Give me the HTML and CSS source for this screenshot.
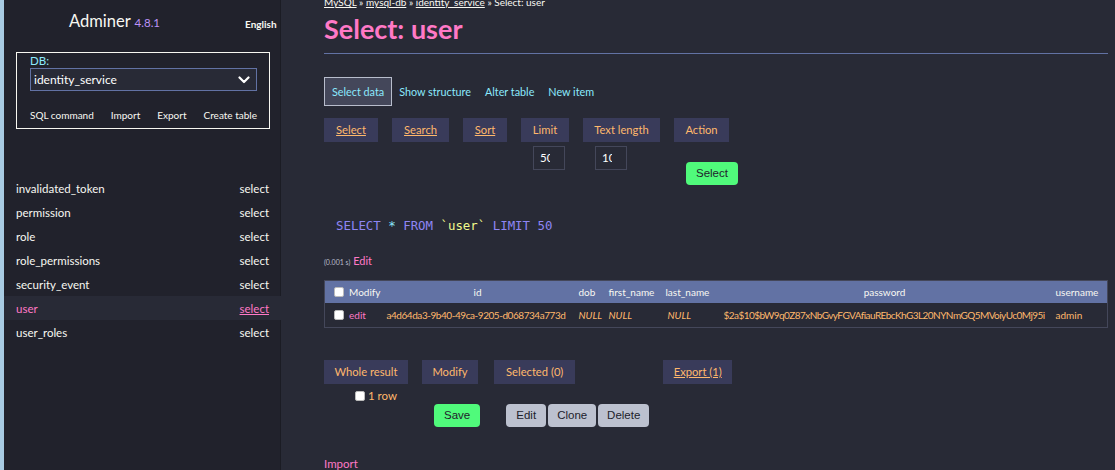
FILE: index.html
```html
<!DOCTYPE html>
<html lang="en">
<head>
<meta charset="utf-8">
<title>Select: user - Adminer</title>
<link rel="stylesheet" href="styles.css">
</head>
<body>
<div class="page">
  <div class="strip"></div>
  <aside class="sidebar">
    <div class="brand">
      <span class="logo">Adminer <span class="version">4.8.1</span></span>
      <span class="lang">English</span>
    </div>
    <div class="dbbox">
      <div class="dblabel">DB:</div>
      <div class="dbselect">
        <span>identity_service</span>
        <svg class="chev" width="12" height="8" viewBox="0 0 12 8"><path d="M1.5 1.5 L6 6 L10.5 1.5" fill="none" stroke="#fff" stroke-width="2.2" stroke-linecap="round" stroke-linejoin="round"/></svg>
      </div>
      <div class="dblinks">
        <a>SQL command</a><a>Import</a><a>Export</a><a>Create table</a>
      </div>
    </div>
    <ul class="tables">
      <li><span>invalidated_token</span><a>select</a></li>
      <li><span>permission</span><a>select</a></li>
      <li><span>role</span><a>select</a></li>
      <li><span>role_permissions</span><a>select</a></li>
      <li><span>security_event</span><a>select</a></li>
      <li class="active"><span>user</span><a>select</a></li>
      <li><span>user_roles</span><a>select</a></li>
    </ul>
  </aside>
  <main class="main">
    <div class="crumbs"><a>MySQL</a> » <a>mysql-db</a> » <a>identity_service</a> » Select: user</div>
    <h1 class="title">Select: user</h1>
    <nav class="tabs">
      <a class="tab current">Select data</a>
      <a class="tab">Show structure</a>
      <a class="tab">Alter table</a>
      <a class="tab">New item</a>
    </nav>
    <div class="form">
      <div class="fs"><span class="legend u w-select">Select</span></div>
      <div class="fs"><span class="legend u w-search">Search</span></div>
      <div class="fs"><span class="legend u w-sort">Sort</span></div>
      <div class="fs"><span class="legend w-limit">Limit</span><span class="inp"><span class="val">50</span></span></div>
      <div class="fs"><span class="legend w-text">Text length</span><span class="inp"><span class="val">10</span></span></div>
      <div class="fs"><span class="legend w-action">Action</span><span class="btn green sel">Select</span></div>
    </div>
    <pre class="sql"><span class="kw">SELECT</span> <span class="star">*</span> <span class="kw">FROM</span> <span class="id">`user`</span> <span class="kw">LIMIT</span> <span class="kw">50</span></pre>
    <p class="time"><span class="small">(0.001 s)</span> <a class="pink">Edit</a></p>
    <table class="data">
      <colgroup>
        <col class="c1"><col class="c2"><col class="c3"><col class="c4"><col class="c5"><col class="c6"><col class="c7">
      </colgroup>
      <thead>
        <tr>
          <th class="left"><span class="cb"></span>Modify</th>
          <th>id</th>
          <th class="left">dob</th>
          <th class="left">first_name</th>
          <th class="left">last_name</th>
          <th>password</th>
          <th class="left">username</th>
        </tr>
      </thead>
      <tbody>
        <tr>
          <td><span class="cb"></span><a class="pink">edit</a></td>
          <td class="idc">a4d64da3-9b40-49ca-9205-d068734a773d</td>
          <td><i>NULL</i></td>
          <td><i>NULL</i></td>
          <td class="right"><i>NULL</i></td>
          <td class="pw">$2a$10$bW9q0Z87xNbGvyFGVAfiauREbcKhG3L20NYNmGQ5MVoiyUc0Mj95i</td>
          <td>admin</td>
        </tr>
      </tbody>
    </table>
    <div class="bottom">
      <div class="bfs"><span class="legend w-whole">Whole result</span><label class="onerow"><span class="cb"></span>1 row</label></div>
      <div class="bfs"><span class="legend w-modify">Modify</span><span class="btn green save">Save</span></div>
      <div class="bfs"><span class="legend w-selected">Selected (0)</span><div class="grays"><span class="btn gray">Edit</span><span class="btn gray">Clone</span><span class="btn gray">Delete</span></div></div>
      <div class="bfs"><span class="legend u w-export">Export (1)</span></div>
    </div>
    <a class="import pink">Import</a>
  </main>
</div>
</body>
</html>
```
FILE: styles.css
```css
* { box-sizing: border-box; }
html, body { margin: 0; padding: 0; }
body {
  background: #282a36;
  color: #f8f8f2;
  font-family: Lato, "Noto Sans", sans-serif;
  font-size: 11px;
  width: 1115px;
  height: 470px;
  overflow: hidden;
}
a { color: inherit; text-decoration: none; }
.page { display: flex; height: 470px; }
.strip { width: 4px; background: #a8cbe2; flex: none; }
.sidebar {
  width: 277px;
  flex: none;
  background: #21222c;
  border-right: 1px solid #1b1c24;
}
.brand {
  position: relative;
  height: 48px;
  padding: 11px 0 0 65px;
}
.logo { font-size: 16.5px; color: #f8f8f2; }
.version { font-size: 11.5px; color: #bd93f9; }
.lang {
  position: absolute;
  left: 241px;
  top: 18px;
  font-size: 10px;
  font-weight: 700;
  color: #f8f8f2;
}
.dbbox {
  margin: 4px 0 0 12px;
  width: 254px;
  height: 77px;
  border: 1px solid #f8f8f2;
  padding: 1px 12px 0 13px;
}
.dblabel { color: #8be9fd; font-size: 11.5px; line-height: 14px; }
.dbselect {
  height: 23px;
  border: 1px solid #6272a4;
  background: #282a36;
  display: flex;
  align-items: center;
  justify-content: space-between;
  padding: 0 6px 0 3px;
  font-size: 12px;
  color: #fff;
}
.dblinks {
  display: flex;
  justify-content: space-between;
  margin-top: 18px;
  font-size: 10px;
  color: #f8f8f2;
}
.tables {
  list-style: none;
  margin: 47px 0 0 0;
  padding: 0;
}
.tables li {
  display: flex;
  justify-content: space-between;
  align-items: center;
  height: 24px;
  padding: 0 11px 0 12px;
  font-size: 11.5px;
  color: #f8f8f2;
}
.tables li.active {
  background: #282a36;
  margin-right: -1px;
  padding-right: 12px;
  color: #ff79c6;
}
.tables li.active a { text-decoration: underline; }

.main {
  flex: 1;
  padding-left: 43px;
  padding-right: 9px;
}
.crumbs {
  margin-top: -5px;
  font-size: 10px;
  line-height: 14px;
  color: #f8f8f2;
}
.crumbs a { text-decoration: underline; }
.title {
  margin: 3px 0 0;
  font-size: 27px;
  font-weight: 700;
  color: #ff79c6;
  line-height: 34px;
  padding-bottom: 7px;
  border-bottom: 1px solid #6272a4;
}
.tabs {
  display: flex;
  align-items: center;
  margin-top: 23px;
  height: 29px;
}
.tab {
  color: #8be9fd;
  font-size: 10.8px;
  padding: 0 7px;
  line-height: 27px;
}
.tab.current {
  border: 1px solid #b8bdcc;
  background: #44475a;
}
.form { display: flex; margin-top: 12px; height: 81px; }
.fs { display: flex; flex-direction: column; align-items: flex-start; margin-right: 14px; }
.legend {
  display: inline-block;
  background: #393b5a;
  color: #ffb86c;
  font-size: 11.2px;
  line-height: 24px;
  height: 24px;
  text-align: center;
  white-space: nowrap;
}
.w-select { width: 54px; } .w-search { width: 57px; } .w-sort { width: 44px; }
.w-limit { width: 48px; } .w-text { width: 77px; } .w-action { width: 55px; }
.w-whole { width: 84px; } .w-modify { width: 56px; } .w-selected { width: 81px; } .w-export { width: 69px; }
.u { text-decoration: underline; }
.inp {
  display: block;
  margin: 4px 0 0 12px;
  width: 32px;
  height: 24px;
  border: 1px solid #44475a;
  color: #fff;
  font-size: 11.5px;
  line-height: 22px;
  padding-left: 6px;
}
.val {
  display: block;
  width: 10px;
  overflow: hidden;
  white-space: nowrap;
}
.btn {
  display: inline-block;
  height: 23px;
  line-height: 23px;
  padding: 0 8px;
  border-radius: 4px;
  font-size: 11.5px;
  color: #21222c;
  font-family: "Liberation Sans", Arial, sans-serif;
}
.sel { margin: 20px 0 0 12px; padding: 0 10px; }
.green { background: #50fa7b; }
.gray { background: #bcc1cf; }
.sql {
  margin: 19px 0 0 12px;
  font-family: "DejaVu Sans Mono", monospace;
  font-size: 12.4px;
  line-height: 16px;
  color: #9d8ff7;
}
.sql .kw { color: #8f86f4; }
.sql .star { color: #8be9fd; }
.sql .id { color: #f1fa8c; }
.time { margin: 20px 0 0; font-size: 11px; line-height: 14px; }
.time .small { font-size: 7px; color: #b8bdcc; }
.pink { color: #ff79c6; }
.data {
  margin-top: 11px;
  border-collapse: collapse;
  table-layout: fixed;
  width: 783px;
  border: 1px solid #44475a;
  font-size: 10px;
}
.c1 { width: 56px; } .c2 { width: 194px; } .c3 { width: 30px; } .c4 { width: 57px; }
.c5 { width: 56px; } .c6 { width: 334px; } .c7 { width: 56px; }
.data th {
  background: #6272a4;
  color: #f8f8f2;
  font-weight: 400;
  height: 22px;
  padding: 0 4px;
  text-align: center;
  white-space: nowrap;
}
.data th.left { text-align: left; }
.data td {
  height: 25px;
  color: #ffb86c;
  padding: 0 4px;
  white-space: nowrap;
  overflow: hidden;
}
.data td.idc { letter-spacing: -0.45px; padding-left: 6px; }
.data td.right { padding-left: 6px; }
.data td i { color: #ffb86c; }
.data td.pw { padding-left: 6px; letter-spacing: -0.55px; }
.cb {
  display: inline-block;
  width: 10px;
  height: 10px;
  background: #fff;
  border: 1px solid #bbb;
  border-radius: 2px;
  vertical-align: -1px;
  margin: 0 5px 0 5px;
}
.bottom { display: flex; margin-top: 32px; }
.bfs { display: flex; flex-direction: column; align-items: flex-start; margin-right: 14px; }
.onerow { color: #ffb86c; font-size: 11.5px; margin: 5px 0 0 31px; }
.onerow .cb { margin: 0 3px 0 0; }
.save { margin: 20px 0 0 12px; padding: 0 10px; }
.grays { display: flex; gap: 2px; margin: 20px 0 0 12px; }
.grays .btn { padding: 0; text-align: center; }
.grays .btn:nth-child(1) { width: 40px; }
.grays .btn:nth-child(2) { width: 48px; }
.grays .btn:nth-child(3) { width: 51px; }
.import {
  display: block;
  margin-top: 30px;
  font-size: 11.5px;
}
```
